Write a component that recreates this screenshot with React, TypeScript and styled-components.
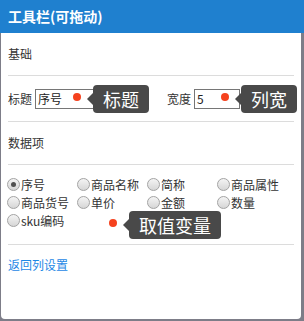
import React from "react";
import styled, { createGlobalStyle } from "styled-components";

const Global = createGlobalStyle`
  html, body { margin: 0; padding: 0; }
  body {
    background: #7d7d88;
    font-family: "Noto Sans CJK SC", "Noto Sans", sans-serif;
    font-size: 12px;
    color: #333;
  }
`;

const Frame = styled.div`
  width: 304px;
  height: 321px;
  display: flex;
  flex-direction: column;
`;

const Header = styled.div`
  height: 33px;
  flex: none;
  background: #1f80cf;
  color: #fff;
  font-weight: bold;
  font-size: 14px;
  display: flex;
  align-items: center;
  padding: 0 8px 2px;
  box-sizing: border-box;
`;

const Body = styled.div`
  position: relative;
  margin: 0 3px 0 1px;
  height: 286px;
  background: #fff;
  border-radius: 0 0 4px 4px;
  padding: 0 7px;
`;

const SectionTitle = styled.div`
  height: 42px;
  display: flex;
  align-items: center;
  line-height: 18px;
  border-bottom: 1px solid #dcdcdc;
`;

const FieldRow = styled.div`
  height: 45px;
  display: flex;
  align-items: center;
  border-bottom: 1px solid #dcdcdc;
`;

const Field = styled.div<{ $w?: number }>`
  display: flex;
  align-items: center;
  width: ${(p) => (p.$w ? `${p.$w}px` : "auto")};
  flex: none;
`;

const Label = styled.span`
  margin-right: 3px;
`;

const Input = styled.div<{ $w: number }>`
  width: ${(p) => p.$w}px;
  height: 20px;
  box-sizing: border-box;
  border: 1px solid #767676;
  padding: 0 2px;
  display: flex;
  align-items: center;
  color: #222;
`;

const Unit = styled.span`
  margin-left: 3px;
`;

const RadioGrid = styled.div`
  display: grid;
  grid-template-columns: repeat(4, 70px);
  grid-auto-rows: 18px;
  padding: 10px 0 15px;
  border-bottom: 1px solid #dcdcdc;
`;

const RadioItem = styled.label`
  display: flex;
  align-items: center;
  white-space: nowrap;
`;

const RadioCircle = styled.span<{ $checked?: boolean }>`
  width: 13px;
  height: 13px;
  box-sizing: border-box;
  margin-left: -1px;
  margin-right: 1px;
  border-radius: 50%;
  border: 1px solid #a3a3a3;
  background: linear-gradient(#f4f4f4, #d6d6d6);
  display: flex;
  align-items: center;
  justify-content: center;
  &::after {
    content: "";
    width: 5px;
    height: 5px;
    border-radius: 50%;
    background: #505050;
    display: ${(p) => (p.$checked ? "block" : "none")};
  }
`;

const Link = styled.a`
  display: block;
  padding-top: 11px;
  line-height: 18px;
  color: #1e88e5;
  text-decoration: none;
`;

const Callout = styled.div<{ $x: number; $y: number }>`
  position: absolute;
  left: ${(p) => p.$x}px;
  top: ${(p) => p.$y}px;
  display: flex;
  align-items: center;
`;

const Dot = styled.span`
  width: 8px;
  height: 8px;
  border-radius: 50%;
  background: #f5421e;
  margin: -4px 6px 0 0;
`;

const Arrow = styled.span`
  width: 0;
  height: 0;
  border-top: 6px solid transparent;
  border-bottom: 6px solid transparent;
  border-right: 6px solid #494949;
`;

const Bubble = styled.span`
  height: 28px;
  padding: 0 10px;
  background: #494949;
  color: #fff;
  border-radius: 4px;
  font-size: 18px;
  display: flex;
  align-items: center;
  white-space: nowrap;
`;

const radios = [
  { t: "序号", c: true },
  { t: "商品名称" },
  { t: "简称" },
  { t: "商品属性" },
  { t: "商品货号" },
  { t: "单价" },
  { t: "金额" },
  { t: "数量" },
  { t: "sku编码" },
];

const Tip = ({ x, y, text }: { x: number; y: number; text: string }) => (
  <Callout $x={x} $y={y}>
    <Dot />
    <Arrow />
    <Bubble>{text}</Bubble>
  </Callout>
);

export default function App() {
  return (
    <>
      <Global />
      <Frame>
        <Header>工具栏(可拖动)</Header>
        <Body>
          <SectionTitle>基础</SectionTitle>
          <FieldRow>
            <Field $w={159}>
              <Label>标题</Label>
              <Input $w={63}>序号</Input>
            </Field>
            <Field>
              <Label>宽度</Label>
              <Input $w={46}>5</Input>
              <Unit>mm</Unit>
            </Field>
          </FieldRow>
          <SectionTitle>数据项</SectionTitle>
          <RadioGrid>
            {radios.map((r) => (
              <RadioItem key={r.t}>
                <RadioCircle $checked={r.c} />
                {r.t}
              </RadioItem>
            ))}
          </RadioGrid>
          <Link>返回列设置</Link>
          <Tip x={72} y={52} text="标题" />
          <Tip x={220} y={52} text="列宽" />
          <Tip x={108} y={178} text="取值变量" />
        </Body>
      </Frame>
    </>
  );
}
